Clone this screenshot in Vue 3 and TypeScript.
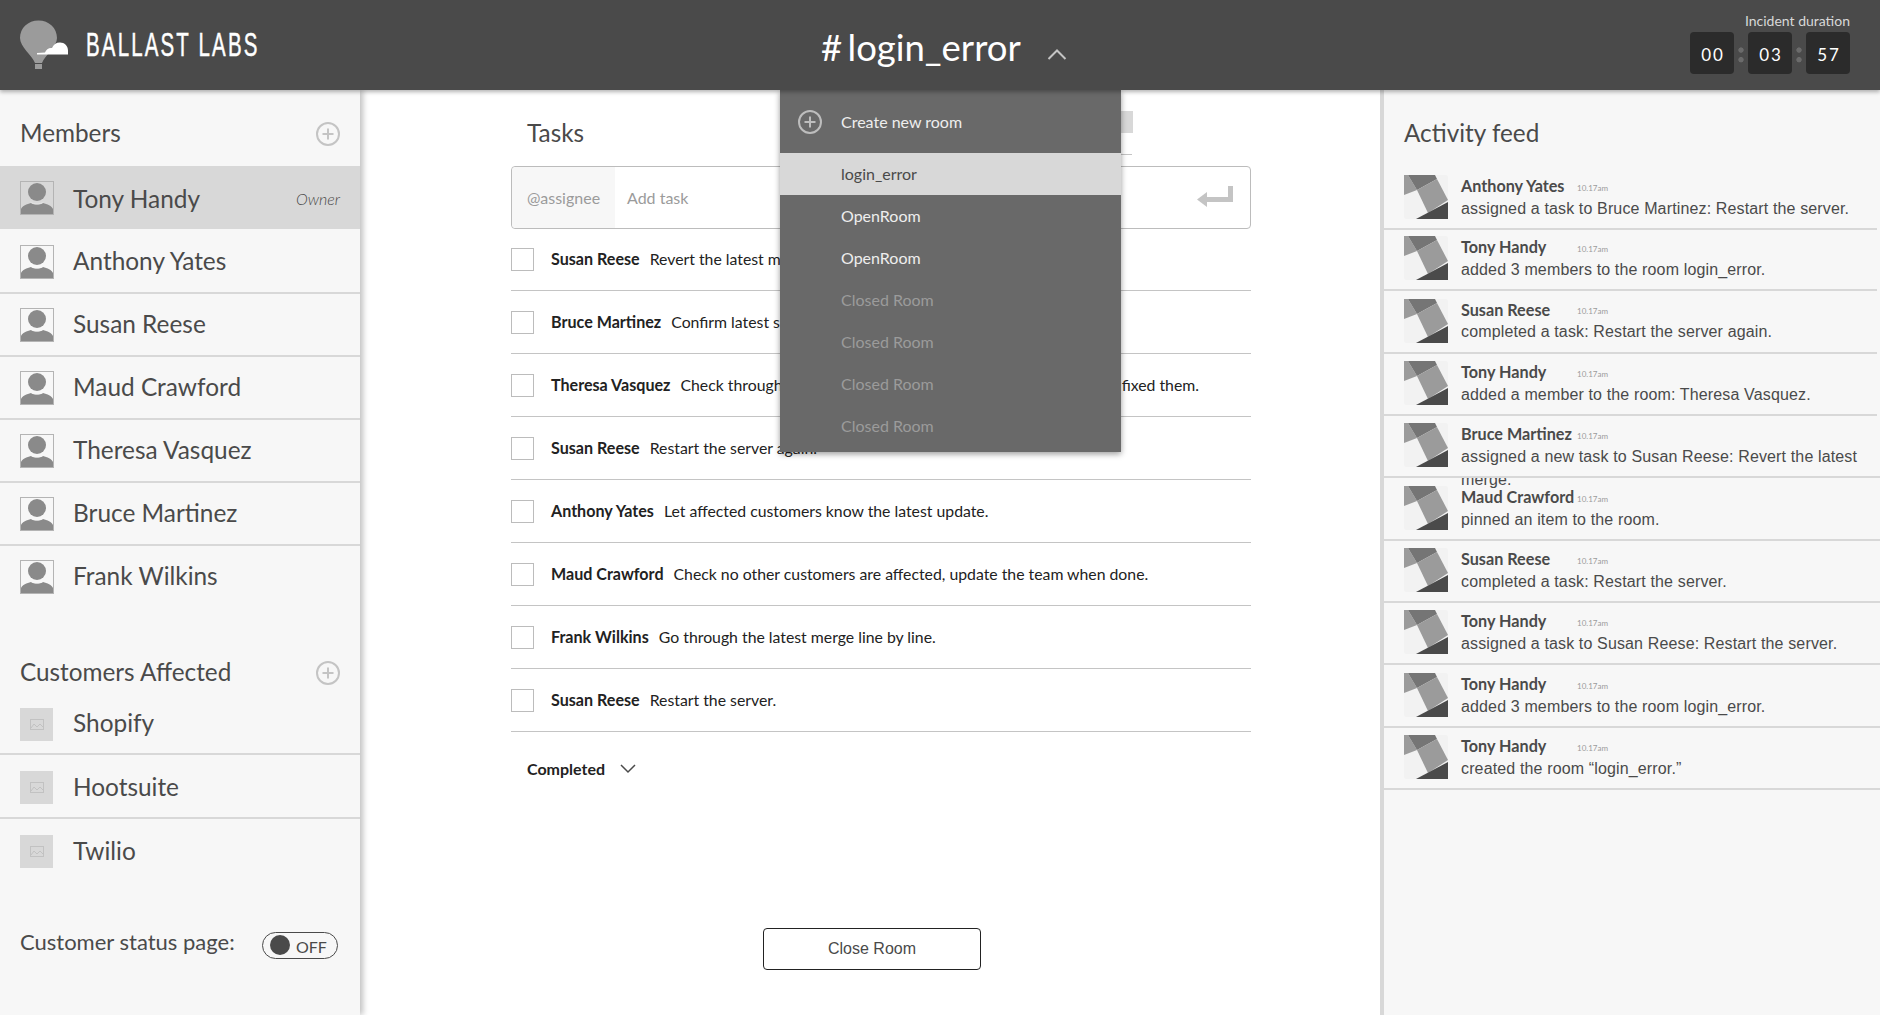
<script setup lang="ts">
const members = ['Tony Handy', 'Anthony Yates', 'Susan Reese', 'Maud Crawford', 'Theresa Vasquez', 'Bruce Martinez', 'Frank Wilkins']
const customers = ['Shopify', 'Hootsuite', 'Twilio']
const tasks = [
  ['Susan Reese', 'Revert the latest merge.'],
  ['Bruce Martinez', 'Confirm latest suspects in the error logs.'],
  ['Theresa Vasquez', 'Check through the error logs and confirm the last changes have fixed them.'],
  ['Susan Reese', 'Restart the server again.'],
  ['Anthony Yates', 'Let affected customers know the latest update.'],
  ['Maud Crawford', 'Check no other customers are affected, update the team when done.'],
  ['Frank Wilkins', 'Go through the latest merge line by line.'],
  ['Susan Reese', 'Restart the server.'],
]
const rooms = [
  { name: 'login_error', kind: 'current' },
  { name: 'OpenRoom', kind: 'open' },
  { name: 'OpenRoom', kind: 'open' },
  { name: 'Closed Room', kind: 'closed' },
  { name: 'Closed Room', kind: 'closed' },
  { name: 'Closed Room', kind: 'closed' },
  { name: 'Closed Room', kind: 'closed' },
]
const feed = [
  { name: 'Anthony Yates', text: 'assigned a task to Bruce Martinez: Restart the server.', h: 63 },
  { name: 'Tony Handy', text: 'added 3 members to the room login_error.', h: 61 },
  { name: 'Susan Reese', text: 'completed a task: Restart the server again.', h: 62.5 },
  { name: 'Tony Handy', text: 'added a member to the room: Theresa Vasquez.', h: 62.5 },
  { name: 'Bruce Martinez', text: 'assigned a new task to Susan Reese: Revert the latest merge.', h: 62 },
  { name: 'Maud Crawford', text: 'pinned an item to the room.', h: 63 },
  { name: 'Susan Reese', text: 'completed a task: Restart the server.', h: 62 },
  { name: 'Tony Handy', text: 'assigned a task to Susan Reese: Restart the server.', h: 62 },
  { name: 'Tony Handy', text: 'added 3 members to the room login_error.', h: 63 },
  { name: 'Tony Handy', text: 'created the room “login_error.”', h: 62 },
]
</script>

<template>
  <div class="page">
    <header class="top">
      <div class="brand">
        <svg class="logo" width="60" height="60" viewBox="15 15 60 60">
          <path d="M38.500 20.500C28 20.500 20 28 20 38c0 9 12 17 15 25h7c3-8 15-16 15-25 0-10-8-17.500-18.500-17.500z" fill="#9b9b9b" />
          <rect x="35" y="64" width="7" height="5" fill="#9b9b9b" />
          <path d="M37 54.500v-1.500l8-.5c1-3 4-5 7-4.500 1.500-3.500 4-5.500 8-5.500 4.500 0 8 3.500 8 8v4z" fill="#fff" />
        </svg>
        <span class="wordmark">BALLAST LABS</span>
      </div>
      <div class="room">
        <span class="room-name"># login_error</span>
        <svg width="20" height="12" viewBox="0 0 20 12"><path d="M1.500 11L10 2.500 18.500 11" fill="none" stroke="#c4c4c4" stroke-width="2" /></svg>
      </div>
      <div class="timer">
        <div class="timer-label">Incident duration</div>
        <div class="timer-row">
          <span class="digit">00</span><i class="dots"></i><span class="digit">03</span><i class="dots"></i><span class="digit">57</span>
        </div>
      </div>
    </header>

    <div class="body">
      <aside class="left">
        <div class="side-head">
          <h2>Members</h2>
          <svg class="plus" width="24" height="24" viewBox="0 0 24 24"><circle cx="12" cy="12" r="11" /><path d="M12 6.500v11M6.500 12h11" /></svg>
        </div>
        <ul class="members">
          <li v-for="(m, i) in members" :key="m" class="member" :class="{ active: i === 0 }">
            <svg class="person" width="34" height="34" viewBox="0 0 34 34">
              <rect x=".5" y=".5" width="33" height="33" fill="none" stroke="#b4b4b4" />
              <circle cx="17" cy="11" r="9" fill="#8a8a8a" />
              <path d="M1 33v-5c1-3 6-5 10-6 3 2 9 2 12 0 4 1 9 3 10 6v5z" fill="#8a8a8a" />
              <path d="M10.500 21c3 2.500 10 2.500 13 0" fill="none" stroke="#f7f7f7" />
            </svg>
            <span class="member-name">{{ m }}</span>
            <em v-if="i === 0" class="owner">Owner</em>
          </li>
        </ul>
        <div class="side-head customers-head">
          <h2>Customers Affected</h2>
          <svg class="plus" width="24" height="24" viewBox="0 0 24 24"><circle cx="12" cy="12" r="11" /><path d="M12 6.500v11M6.500 12h11" /></svg>
        </div>
        <ul class="customers">
          <li v-for="c in customers" :key="c" class="customer">
            <span class="thumb">
              <svg width="14" height="11" viewBox="0 0 14 11"><rect x=".5" y=".5" width="13" height="10" fill="none" stroke="#c2c2c2" /><path d="M1 9l3-4 3 3 3-3 3 3" fill="none" stroke="#c2c2c2" /></svg>
            </span>
            <span class="member-name">{{ c }}</span>
          </li>
        </ul>
        <div class="status">
          <span class="status-label">Customer status page:</span>
          <span class="toggle"><i class="knob"></i><span class="toggle-text">OFF</span></span>
        </div>
      </aside>

      <main class="center">
        <div class="center-inner">
          <h2 class="tasks-title">Tasks</h2>
          <div class="add">
            <span class="assignee">@assignee</span>
            <span class="add-text">Add task</span>
            <svg class="enter" width="36" height="21" viewBox="0 0 36 21"><path d="M33.500 0v13.500H9" fill="none" stroke="#c4c4c4" stroke-width="5" /><path d="M0 13.500L10 6v15z" fill="#c4c4c4" /></svg>
          </div>
          <ul class="tasks">
            <li v-for="(t, i) in tasks" :key="i" class="task">
              <span class="check"></span>
              <b class="task-name">{{ t[0] }}</b>
              <span class="task-text">{{ t[1] }}</span>
            </li>
          </ul>
          <div class="completed">
            <b>Completed</b>
            <svg width="16" height="10" viewBox="0 0 16 10"><path d="M1 1l7 7 7-7" fill="none" stroke="#4a4a4a" stroke-width="1.500" /></svg>
          </div>
          <div class="close-wrap"><button class="close">Close Room</button></div>
        </div>
        <div class="behind-chip"></div>
        <div class="behind-line"></div>
        <div class="dropdown">
          <div class="create">
            <svg class="plus light" width="24" height="24" viewBox="0 0 24 24"><circle cx="12" cy="12" r="11" /><path d="M12 6.500v11M6.500 12h11" /></svg>
            <span>Create new room</span>
          </div>
          <div v-for="(r, i) in rooms" :key="i" class="room-item" :class="r.kind">{{ r.name }}</div>
        </div>
      </main>

      <aside class="right">
        <h2 class="feed-title">Activity feed</h2>
        <ul class="feed">
          <li v-for="(f, i) in feed" :key="i" class="item" :class="{ short: i < 4 }" :style="{ height: f.h + 'px' }">
            <svg class="avatar" width="44" height="44" viewBox="0 0 44 44">
              <rect width="44" height="44" rx="2" fill="#f2f2f2" />
              <path d="M0 0h4l9 15L0 20z" fill="#9b9b9b" />
              <path d="M4 0h27l2 4-20 11z" fill="#757575" />
              <path d="M13 15L33 4l11 21-20 13z" fill="#9b9b9b" />
              <path d="M12 44l32-17v17z" fill="#4a4a4a" />
            </svg>
            <div class="item-body">
              <div class="item-head"><b class="item-name">{{ f.name }}</b><span class="time">10.17am</span></div>
              <div class="item-text">{{ f.text }}</div>
            </div>
          </li>
        </ul>
      </aside>
    </div>
  </div>
</template>

<style>
html, body { margin: 0; padding: 0; background: #fff; overflow: hidden; }
</style>

<style scoped>
.page { width: 1880px; height: 1015px; display: flex; flex-direction: column; font-family: Lato, "Open Sans", sans-serif; color: #4a4a4a; overflow: hidden; }
h2 { margin: 0; font-weight: 400; font-size: 24.300px; color: #4a4a4a; }
ul { margin: 0; padding: 0; list-style: none; }
.top { position: relative; z-index: 5; flex: 0 0 90px; height: 90px; background: #4a4a4a; box-shadow: 0 2px 4px rgba(0,0,0,.3); display: flex; align-items: center; }
.brand { display: flex; align-items: center; width: 360px; padding-left: 15px; box-sizing: border-box; }
.logo { flex: none; }
.wordmark { display: inline-block; font-family: "Liberation Sans", sans-serif; font-weight: 400; font-size: 33px; letter-spacing: 3.500px; color: #fff; margin-left: 11px; transform: scaleX(.62); transform-origin: 0 50%; white-space: nowrap; -webkit-text-stroke: .5px #fff; }
.room { position: absolute; left: 821px; top: 22px; display: flex; align-items: center; gap: 26px; }
.room-name { font-size: 36.500px; word-spacing: -4px; color: #fff; line-height: 50px; }
.room svg { margin-top: 13px; }
.timer { position: absolute; right: 30px; top: 12px; display: flex; flex-direction: column; align-items: flex-end; }
.timer-label { font-size: 14px; line-height: 18px; color: #d8d8d8; }
.timer-row { margin-top: 2px; display: flex; align-items: center; }
.digit { width: 44px; height: 42px; background: #2b2b2b; border-radius: 4px; color: #fff; font-size: 17px; letter-spacing: 2px; display: flex; align-items: center; justify-content: center; padding: 3px 0 0 2px; box-sizing: border-box; }
.dots { width: 14px; height: 42px; display: block; background: radial-gradient(circle at 50% 43%, #6b6b6b 2.300px, transparent 3px), radial-gradient(circle at 50% 66%, #6b6b6b 2.300px, transparent 3px); }
.body { flex: 1; display: flex; min-height: 0; position: relative; }
.left { flex: 0 0 360px; width: 360px; background: #f7f7f7; box-shadow: 3px 0 6px rgba(0,0,0,.25); z-index: 2; position: relative; }
.side-head { height: 76px; display: flex; align-items: center; justify-content: space-between; padding: 10px 20px 0; box-sizing: border-box; }
.side-head h2 { margin-bottom: 2px; }
.side-head .plus { margin-top: 2px; }
.plus { fill: none; stroke: #c4c4c4; stroke-width: 2; flex: none; }
.plus.light { stroke: #bdbdbd; }
.member { height: 63px; box-sizing: border-box; padding: 3px 20px 0; display: flex; align-items: center; position: relative; }
.member:not(.active):not(:last-child)::after { content: ""; position: absolute; left: 0; right: 0; bottom: -2px; height: 2px; background: #d8d8d8; }
.member.active { background: #d8d8d8; padding-top: 0; }
.member-name { font-size: 24.400px; margin-left: 19px; margin-top: -2.500px; color: #4a4a4a; }
.active .member-name { margin-top: 1px; }
.person { flex: none; }
.active .person circle + path + path { stroke: #e4e4e4; }
.owner { margin-left: auto; font-size: 16px; font-weight: 300; color: #4a4a4a; margin-top: 2px; }
.side-head.customers-head { margin-top: 42px; height: 46px; padding-top: 0; }
.customer { height: 64px; display: flex; align-items: center; padding: 3px 20px 0; box-sizing: border-box; border-bottom: 2px solid #d8d8d8; }
.customer:first-child { height: 60px; padding-top: 0; }
.customer:last-child { height: 62px; border-bottom: 0; }
.thumb { width: 33px; height: 33px; background: #d8d8d8; flex: none; display: flex; align-items: center; justify-content: center; }
.customer .member-name { margin-left: 20px; }
.status { margin-top: 47px; display: flex; align-items: center; justify-content: space-between; padding: 0 22px 0 20px; }
.status-label { font-size: 22px; margin-bottom: 4px; }
.toggle { width: 76px; height: 27px; box-sizing: border-box; border: 1px solid #4a4a4a; border-radius: 14px; display: flex; align-items: center; font-size: 16px; padding-left: 7px; gap: 6px; margin-top: 3px; }
.toggle-text { margin-top: 2px; }
.knob { width: 20px; height: 20px; border-radius: 50%; background: #4a4a4a; display: block; }
.center { flex: 1; position: relative; min-width: 0; background: #fff; }
.center-inner { margin-left: 151px; width: 740px; }
.tasks-title { height: 76px; line-height: 85px; padding-left: 16px; }
.add { height: 63px; box-sizing: border-box; border: 1px solid #bcbcbc; border-radius: 4px; display: flex; align-items: center; position: relative; }
.assignee { width: 103px; height: 100%; background: #f7f7f7; color: #9b9b9b; font-size: 16px; display: flex; align-items: center; justify-content: center; border-radius: 4px 0 0 4px; }
.add-text { margin-left: 12px; font-size: 16px; color: #9b9b9b; }
.enter { margin-left: auto; margin-right: 17px; margin-top: -2px; }
.task { height: 63px; box-sizing: border-box; border-bottom: 1px solid #c4c4c4; display: flex; align-items: center; font-size: 15.800px; color: #222; }
.task:first-child { height: 62px; }
.check { width: 23px; height: 23px; box-sizing: border-box; border: 1px solid #bcbcbc; flex: none; margin-right: 17px; background: #fff; }
.task-name { font-weight: 700; font-size: 16.100px; margin-right: 10px; margin-top: -2px; color: #222; }
.task-text { margin-top: -2px; }
.completed { margin-top: 27px; padding-left: 16px; display: flex; align-items: center; gap: 15px; font-size: 16px; color: #222; }
.close-wrap { margin-top: 150px; padding-left: 252px; }
.close { width: 218px; height: 42px; background: #fff; border: 1px solid #222; border-radius: 4px; font-family: "Liberation Sans", sans-serif; font-size: 16px; color: #4a4a4a; }
.behind-chip { position: absolute; left: 761px; top: 21px; width: 12px; height: 22px; background: #d8d8d8; }
.behind-line { position: absolute; left: 761px; top: 64px; width: 11px; height: 1px; background: #c4c4c4; }
.dropdown { position: absolute; left: 420px; top: 0; width: 341px; background: #696969; box-shadow: 0 2px 6px rgba(0,0,0,.4); z-index: 3; padding-bottom: 5px; }
.create { height: 63px; display: flex; align-items: center; padding-left: 18px; color: #eee; font-size: 16px; gap: 19px; }
.room-item { height: 42px; box-sizing: border-box; display: flex; align-items: center; padding: 0 0 2px 61px; font-size: 16px; }
.room-item.current { background: #d8d8d8; color: #4a4a4a; }
.room-item.open { color: #eee; }
.room-item.closed { color: #9b9b9b; }
.right { flex: 0 0 500px; width: 500px; box-sizing: border-box; background: #f7f7f7; border-left: 4px solid #d8d8d8; position: relative; z-index: 2; }
.feed-title { height: 77px; line-height: 85px; padding-left: 20px; }
.item { box-sizing: border-box; display: flex; align-items: flex-end; padding: 0 0 11px 20px; position: relative; }
.item::after { content: ""; position: absolute; left: 0; right: 0; bottom: 0; height: 2px; background: #d8d8d8; }
.item.short::after { left: -4px; right: 3px; }
.avatar { flex: none; }
.item-body { margin-left: 13px; min-width: 0; height: 44px; }
.item-head { height: 21px; display: flex; align-items: center; }
.item-name { width: 116px; flex: none; font-size: 16.200px; font-weight: 700; color: #4a4a4a; white-space: nowrap; }
.time { font-size: 8px; color: #9b9b9b; margin-top: 4px; }
.item-text { font-family: "Liberation Sans", sans-serif; font-size: 16px; letter-spacing: .14px; line-height: 23px; margin-top: .5px; color: #4a4a4a; width: 410px; }
</style>
